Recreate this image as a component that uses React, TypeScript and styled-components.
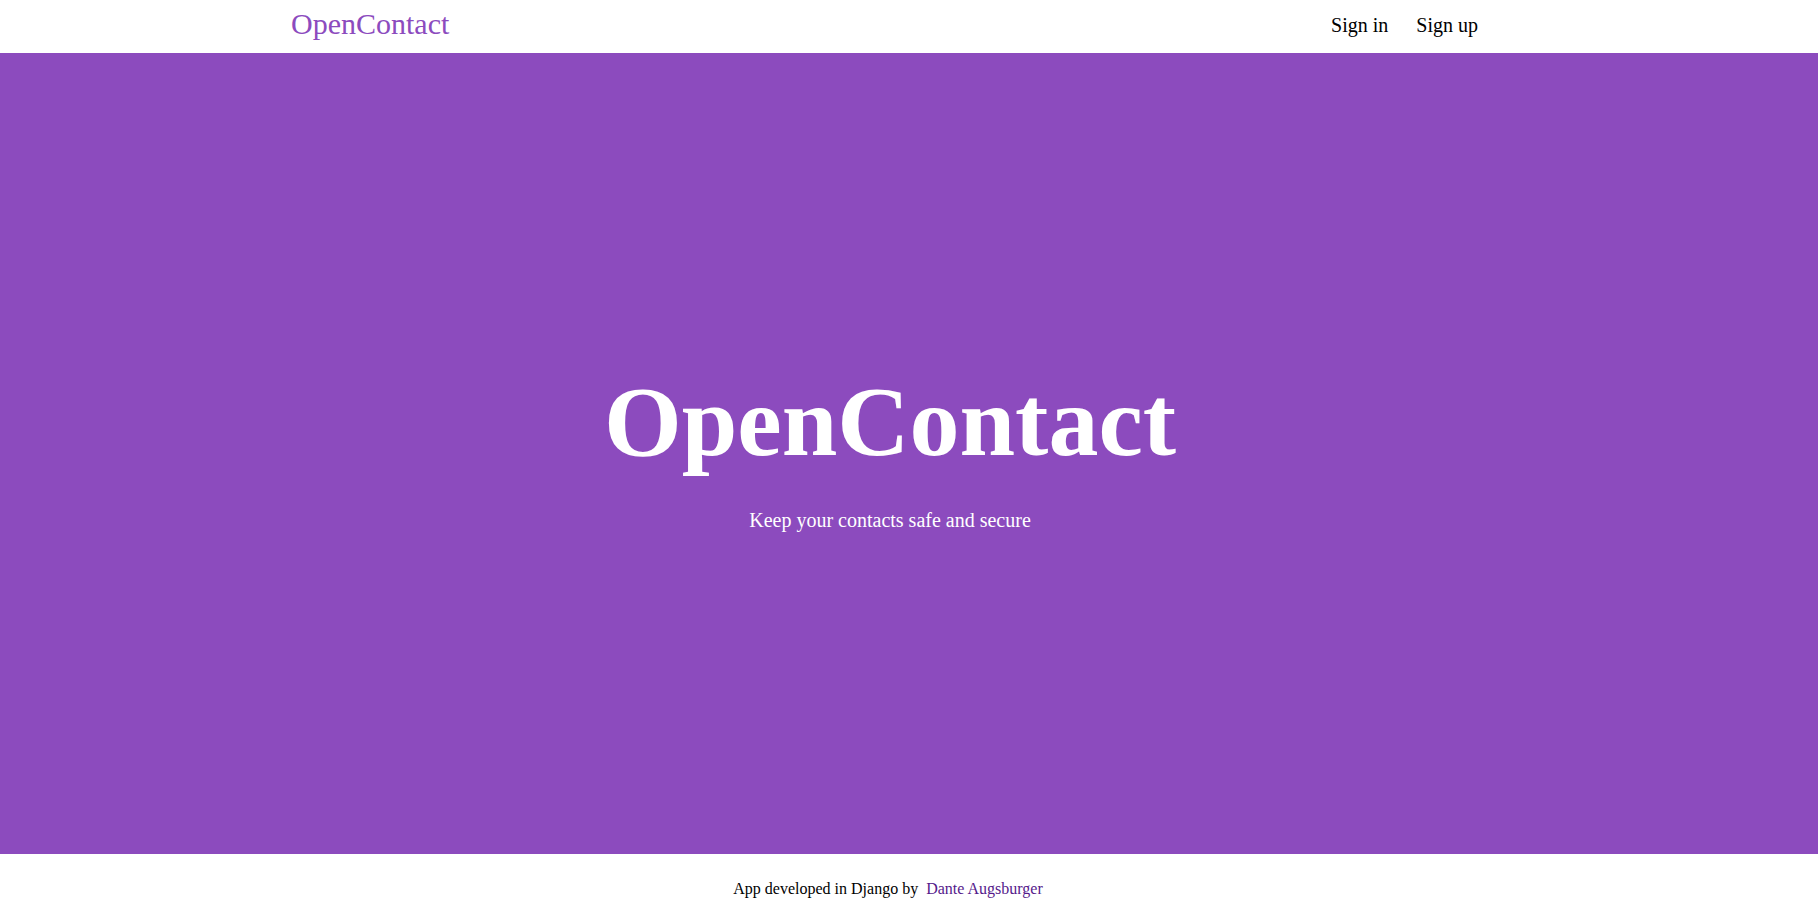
import styled, { createGlobalStyle } from 'styled-components'

const GlobalStyle = createGlobalStyle`
  html, body {
    margin: 0;
    padding: 0;
    background: #ffffff;
    font-family: "Liberation Serif", "Times New Roman", serif;
  }
`

const Page = styled.div`
  display: flex;
  flex-direction: column;
  min-height: 913px;
`

const Navbar = styled.header`
  height: 53px;
  display: flex;
  justify-content: space-between;
  align-items: flex-start;
  padding: 0 340px 0 291px;
  box-sizing: border-box;
`

const Brand = styled.a`
  margin-top: 7px;
  font-size: 30px;
  line-height: 34px;
  color: #8c4bbe;
  text-decoration: none;
`

const NavLinks = styled.nav`
  display: flex;
  gap: 28px;
  padding-top: 14px;
`

const NavLink = styled.a`
  font-size: 20px;
  line-height: 23px;
  color: #000000;
  text-decoration: none;
`

const Hero = styled.section`
  height: 801px;
  background: #8c4bbe;
  color: #ffffff;
  display: flex;
  flex-direction: column;
  align-items: center;
  justify-content: center;
  padding: 0 38px 8px 0;
  box-sizing: border-box;
`

const Title = styled.h1`
  margin: 0 0 32px;
  font-size: 100px;
  line-height: 110px;
  font-weight: bold;
`

const Tagline = styled.p`
  margin: 0;
  font-size: 20px;
  line-height: 23px;
`

const Footer = styled.footer`
  flex: 1;
  padding: 26px 42px 0 0;
  text-align: center;
  font-size: 16px;
  line-height: 18px;
  color: #000000;
`

const AuthorLink = styled.a`
  margin-left: 8px;
  color: #551a8b;
  text-decoration: none;
`

const App = () => {
  return (
    <>
      <GlobalStyle />
      <Page>
        <Navbar>
          <Brand href="#">OpenContact</Brand>
          <NavLinks>
            <NavLink href="#">Sign in</NavLink>
            <NavLink href="#">Sign up</NavLink>
          </NavLinks>
        </Navbar>
        <Hero>
          <Title>OpenContact</Title>
          <Tagline>Keep your contacts safe and secure</Tagline>
        </Hero>
        <Footer>
          App developed in Django by
          <AuthorLink href="#">Dante Augsburger</AuthorLink>
        </Footer>
      </Page>
    </>
  )
}

export default App
